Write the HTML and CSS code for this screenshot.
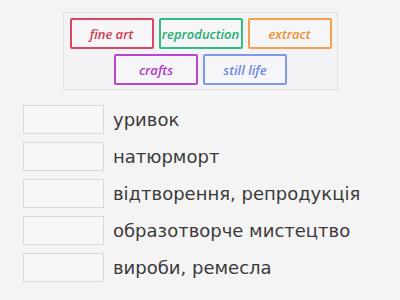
FILE: index.html
```html
<!DOCTYPE html>
<html>
<head>
    <title>Match up</title>
    <meta name="viewport" content="width=device-width, initial-scale=1.0">
    <link rel="stylesheet" href="styles.css">
</head>
<body>
    <div class="bank">
        <div class="tile-row">
            <div class="tile red">fine art</div>
            <div class="tile green">reproduction</div>
            <div class="tile orange">extract</div>
        </div>
        <div class="tile-row">
            <div class="tile purple">crafts</div>
            <div class="tile blue">still life</div>
        </div>
    </div>

    <div class="answers">
        <div class="answer-row">
            <div class="slot"></div>
            <div class="word">уривок</div>
        </div>
        <div class="answer-row">
            <div class="slot"></div>
            <div class="word">натюрморт</div>
        </div>
        <div class="answer-row">
            <div class="slot"></div>
            <div class="word">відтворення, репродукція</div>
        </div>
        <div class="answer-row">
            <div class="slot"></div>
            <div class="word">образотворче мистецтво</div>
        </div>
        <div class="answer-row">
            <div class="slot"></div>
            <div class="word">вироби, ремесла</div>
        </div>
    </div>
</body>
</html>
```

FILE: styles.css
```css
body {
    margin: 0;
    background-color: #f5f4f5;
    font-family: "DejaVu Sans", sans-serif;
    width: 400px;
    height: 300px;
    overflow: hidden;
}

.bank {
    margin: 12px 0 0 63px;
    width: 275px;
    height: 78px;
    box-sizing: border-box;
    border: 1px solid #e2e0e3;
    background-color: #f3f2f4;
    padding: 5px 0 0 0;
    display: flex;
    flex-direction: column;
    align-items: center;
    gap: 5px;
}

.tile-row {
    display: flex;
    gap: 5px;
}

.tile {
    width: 84px;
    height: 31px;
    box-sizing: border-box;
    border: 2px solid;
    border-radius: 2px;
    background-color: #f6f5f7;
    display: flex;
    align-items: center;
    justify-content: center;
    font-family: "Open Sans", sans-serif;
    font-style: italic;
    font-weight: 600;
    font-size: 13px;
}

.red {
    border-color: #d9485e;
    color: #d23a52;
}

.green {
    border-color: #2fbf85;
    color: #1fae74;
}

.orange {
    border-color: #f5a04a;
    color: #ef8f2f;
}

.purple {
    border-color: #bb45cc;
    color: #b23ac6;
}

.blue {
    border-color: #7e98ea;
    color: #6d89e3;
}

.answers {
    margin: 15px 0 0 23px;
    display: flex;
    flex-direction: column;
    gap: 8px;
}

.answer-row {
    display: flex;
    align-items: center;
    gap: 9px;
}

.slot {
    width: 81px;
    height: 29px;
    box-sizing: border-box;
    border: 1px solid #d9d8da;
    background-color: #f7f6f8;
}

.word {
    font-size: 18px;
    color: #3a3a3a;
}
```
